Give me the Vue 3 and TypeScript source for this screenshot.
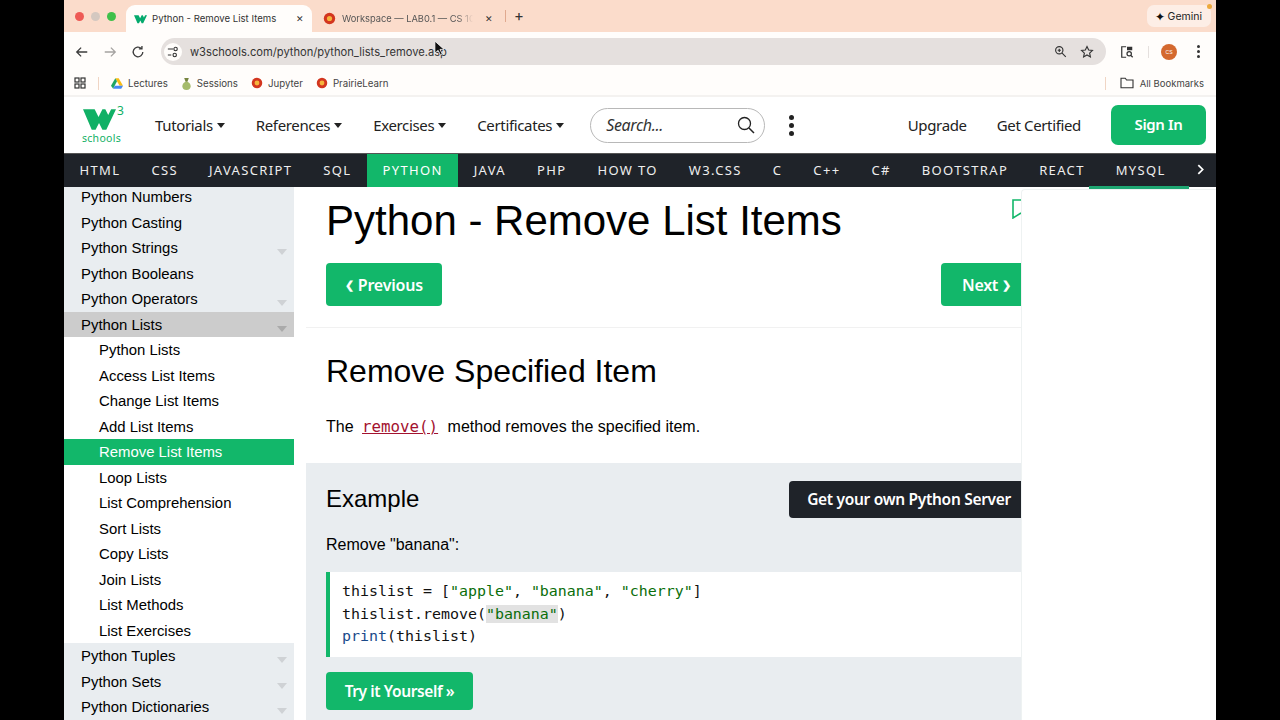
<template>
  <div class="stage">
    <div class="screen">
      <!-- browser chrome -->
      <div class="tabstrip">
        <div class="lights">
          <span class="light red"></span>
          <span class="light grey"></span>
          <span class="light green"></span>
        </div>
        <div class="tab active">
          <svg class="fav" viewBox="0 0 34 22" width="13" height="10"><path d="M0 1h12l4 8 4-8h3l3 6 3-6h5L24 22h-4l-3.500-7-3.500 7h-4z" fill="#04aa6d"/></svg>
          <span class="tab-title">Python - Remove List Items</span>
          <span class="tab-x">✕</span>
        </div>
        <div class="tab plain">
          <svg class="fav" viewBox="0 0 16 16" width="13" height="13"><circle cx="8" cy="8" r="7" fill="#d3361f"/><circle cx="8" cy="8" r="3.200" fill="#f5b53c"/></svg>
          <span class="tab-title fade">Workspace — LAB0.1 — CS 10</span>
          <span class="tab-x">✕</span>
        </div>
        <span class="tab-sep"></span>
        <span class="newtab">+</span>
        <span class="grow"></span>
        <div class="gemini"><span class="spark">✦</span>Gemini</div>
        <span class="notify"></span>
      </div>
      <div class="toolbar">
        <svg viewBox="0 0 16 16" width="14" height="14" class="tool"><path d="M14 8H2.500M7 3L2 8l5 5" fill="none" stroke="#3c3c3c" stroke-width="1.500"/></svg>
        <svg viewBox="0 0 16 16" width="14" height="14" class="tool"><path d="M2 8h11.500M9 3l5 5-5 5" fill="none" stroke="#a5a3a1" stroke-width="1.500"/></svg>
        <svg viewBox="0 0 16 16" width="14" height="14" class="tool"><path d="M13.500 8A5.500 5.500 0 1 1 11.800 4M12.500 1v3.500H9" fill="none" stroke="#3c3c3c" stroke-width="1.500"/></svg>
        <div class="omnibox">
          <span class="site-btn">
            <svg viewBox="0 0 14 14" width="12" height="12"><path d="M1 3.500h6M1 10.500h4" stroke="#333" stroke-width="1.300"/><circle cx="10" cy="3.500" r="2" fill="none" stroke="#333" stroke-width="1.300"/><circle cx="9" cy="10.500" r="2" fill="none" stroke="#333" stroke-width="1.300"/></svg>
          </span>
          <span class="url">w3schools.com/python/python_lists_remove.asp</span>
          <span class="grow"></span>
          <svg viewBox="0 0 16 16" width="13" height="13"><circle cx="6.500" cy="6.500" r="4.500" fill="none" stroke="#333" stroke-width="1.400"/><path d="M10 10l4.500 4.500M4.500 6.500h4M6.500 4.500v4" stroke="#333" stroke-width="1.400"/></svg>
          <svg class="star" viewBox="0 0 16 16" width="14" height="14"><path d="M8 1.800l1.900 4 4.300.5-3.200 3 .9 4.300L8 11.400l-3.900 2.200.9-4.300-3.200-3 4.300-.5z" fill="none" stroke="#333" stroke-width="1.300"/></svg>
        </div>
        <svg class="side-ico" viewBox="0 0 16 16" width="14" height="14"><path d="M7 2H2v12h5" fill="none" stroke="#333" stroke-width="1.400"/><rect x="8" y="2" width="6" height="4" fill="#333"/><circle cx="10.500" cy="10" r="2.500" fill="none" stroke="#333" stroke-width="1.400"/><path d="M12.500 12l2 2" stroke="#333" stroke-width="1.400"/></svg>
        <span class="tool-sep"></span>
        <span class="avatar">CS</span>
        <span class="kebab"><i></i><i></i><i></i></span>
      </div>
      <div class="bookmarks">
        <svg viewBox="0 0 12 12" width="12" height="12"><g fill="none" stroke="#333" stroke-width="1.200"><rect x="1" y="1" width="4" height="4"/><rect x="7" y="1" width="4" height="4"/><rect x="1" y="7" width="4" height="4"/><rect x="7" y="7" width="4" height="4"/></g></svg>
        <span class="bm-sep"></span>
        <div class="bm">
          <svg viewBox="0 0 14 12" width="12" height="11"><path d="M5 0h4l5 8.500h-4z" fill="#f9bc15"/><path d="M5 0l2 3.500L2.500 12 0 8.500z" fill="#1fa463"/><path d="M2.500 12l2-3.500H14L12 12z" fill="#4688f4"/></svg>
          Lectures
        </div>
        <div class="bm">
          <svg viewBox="0 0 12 14" width="11" height="13"><path d="M6 5c3 0 4.500 3 4.500 5A4.500 4 0 0 1 1.500 10C1.500 8 3 5 6 5z" fill="#a5bb6b"/><path d="M3.500 1h5L7 5H5z" fill="#76853f"/></svg>
          Sessions
        </div>
        <div class="bm">
          <svg viewBox="0 0 16 16" width="12" height="12"><circle cx="8" cy="8" r="7" fill="#d3361f"/><circle cx="8" cy="8" r="3.200" fill="#f5b53c"/></svg>
          Jupyter
        </div>
        <div class="bm">
          <svg viewBox="0 0 16 16" width="12" height="12"><circle cx="8" cy="8" r="7" fill="#d3361f"/><circle cx="8" cy="8" r="3.200" fill="#f5b53c"/></svg>
          PrairieLearn
        </div>
        <span class="grow"></span>
        <span class="bm-sep right"></span>
        <div class="bm all">
          <svg viewBox="0 0 16 14" width="14" height="12"><path d="M1 12.500V1.500h5l1.500 2H15v9z" fill="none" stroke="#333" stroke-width="1.300"/></svg>
          All Bookmarks
        </div>
      </div>

      <!-- w3schools header -->
      <div class="topnav">
        <div class="logo">
          <div class="logo-mark">
            <svg viewBox="0 0 34 22" width="33" height="22"><path d="M0 1h12l4 8 4-8h3l3 6 3-6h5L24 22h-4l-3.500-7-3.500 7h-4z" fill="#10b065"/></svg>
            <span class="logo-three">3</span>
          </div>
          <span class="logo-text">schools</span>
        </div>
        <nav class="menu">
          <span v-for="m in menus" :key="m" class="menu-item">{{ m }}<i class="caret"></i></span>
        </nav>
        <div class="search">
          <span>Search...</span>
          <svg viewBox="0 0 18 18" width="18" height="18"><circle cx="7.500" cy="7.500" r="6" fill="none" stroke="#222" stroke-width="1.300"/><path d="M12 12l5 5" stroke="#222" stroke-width="1.500"/></svg>
        </div>
        <span class="dots"><i></i><i></i><i></i></span>
        <span class="grow"></span>
        <span class="link upgrade">Upgrade</span>
        <span class="link">Get Certified</span>
        <span class="signin">Sign In</span>
      </div>
      <div class="topics">
        <span v-for="t in topics" :key="t" class="topic" :class="{ on: t === 'PYTHON' }">{{ t }}</span>
        <svg class="topic-next" viewBox="0 0 8 12" width="7" height="11"><path d="M1.500 1l5 5-5 5" fill="none" stroke="#fff" stroke-width="2"/></svg>
      </div>

      <div class="body">
        <aside class="sidebar">
          <div class="side-scroll">
            <div
              v-for="row in sideRows"
              :key="row.label"
              class="side-row"
              :class="{ sub: row.sub, open: row.open, current: row.current }"
            >
              {{ row.label }}
              <i v-if="row.arrow" class="side-caret"></i>
            </div>
          </div>
        </aside>
        <main class="main">
          <h1>Python - Remove List Items</h1>
          <div class="pager">
            <span class="btn"><span class="chev">❮</span> Previous</span>
            <span class="btn next">Next<span class="chev after">❯</span></span>
          </div>
          <hr />
          <h2>Remove Specified Item</h2>
          <p class="intro">The <a class="code-link">remove()</a> method removes the specified item.</p>
          <section class="example">
            <div class="ex-head">
              <h3>Example</h3>
              <span class="server">Get your own Python Server</span>
            </div>
            <p>Remove "banana":</p>
            <pre class="code"><span class="ln">thislist = [<b>"apple"</b>, <b>"banana"</b>, <b>"cherry"</b>]</span>
<span class="ln">thislist.remove(<b class="mark">"banana"</b>)</span>
<span class="ln"><em>print</em>(thislist)</span></pre>
            <span class="try">Try it Yourself »</span>
          </section>
          <svg class="ad-flag" viewBox="0 0 9 20" width="9" height="20"><path d="M9 1H1v18l8-5" fill="none" stroke="#12b76a" stroke-width="1.600"/></svg>
          <div class="ad-panel"></div>
        </main>
      </div>

      <span class="mysql-line"></span>
      <svg class="cursor" viewBox="0 0 12 18" width="11" height="17"><path d="M1 1v13l3.500-3 2.500 5 2-1-2.500-5H11z" fill="#111" stroke="#fff" stroke-width=".8"/></svg>
    </div>
  </div>
</template>

<script setup lang="ts">
interface SideRow {
  label: string
  sub?: boolean
  arrow?: boolean
  open?: boolean
  current?: boolean
}

const menus = ['Tutorials', 'References', 'Exercises', 'Certificates']

const topics = [
  'HTML', 'CSS', 'JAVASCRIPT', 'SQL', 'PYTHON', 'JAVA', 'PHP', 'HOW TO',
  'W3.CSS', 'C', 'C++', 'C#', 'BOOTSTRAP', 'REACT', 'MYSQL'
]

const sideRows: SideRow[] = [
  { label: 'Python Numbers' },
  { label: 'Python Casting' },
  { label: 'Python Strings', arrow: true },
  { label: 'Python Booleans' },
  { label: 'Python Operators', arrow: true },
  { label: 'Python Lists', arrow: true, open: true },
  { label: 'Python Lists ', sub: true },
  { label: 'Access List Items', sub: true },
  { label: 'Change List Items', sub: true },
  { label: 'Add List Items', sub: true },
  { label: 'Remove List Items', sub: true, current: true },
  { label: 'Loop Lists', sub: true },
  { label: 'List Comprehension', sub: true },
  { label: 'Sort Lists', sub: true },
  { label: 'Copy Lists', sub: true },
  { label: 'Join Lists', sub: true },
  { label: 'List Methods', sub: true },
  { label: 'List Exercises', sub: true },
  { label: 'Python Tuples', arrow: true },
  { label: 'Python Sets', arrow: true },
  { label: 'Python Dictionaries', arrow: true }
]
</script>

<style>
html, body { margin: 0; background: #000; }
</style>

<style scoped>
.stage {
  width: 1280px;
  height: 720px;
  overflow: hidden;
  background: #000;
  padding: 0 64px;
  box-sizing: border-box;
}
.screen {
  position: relative;
  width: 1152px;
  height: 720px;
  overflow: hidden;
  background: #fff;
  font-family: "Liberation Sans", Arial, sans-serif;
  color: #000;
}
.grow { flex: 1; }

/* tab strip */
.tabstrip {
  height: 32px;
  background: #fbdccb;
  display: flex;
  align-items: flex-end;
  position: relative;
  font-family: Inter, "Liberation Sans", sans-serif;
  font-size: 9.600px;
  color: #333;
}
.lights { display: flex; gap: 7px; align-self: center; padding: 0 0 0 11px; width: 62px; box-sizing: border-box; }
.light { width: 9px; height: 9px; border-radius: 50%; }
.light.red { background: #ee5a55; }
.light.grey { background: #d4c8c0; }
.light.green { background: #3fc04a; }
.tab {
  display: flex;
  align-items: center;
  height: 27px;
  box-sizing: border-box;
  padding: 0 8px;
  gap: 5px;
}
.tab.active { width: 186px; background: #fffdfb; border-radius: 9px 9px 0 0; }
.tab.plain { width: 187px; padding-left: 11px; padding-right: 6px; gap: 6px; color: #555; font-size: 9.300px; }
.tab-title { flex: 1; min-width: 0; white-space: nowrap; overflow: hidden; }
.tab-title.fade {
  -webkit-mask-image: linear-gradient(90deg, #000 88%, transparent);
  mask-image: linear-gradient(90deg, #000 88%, transparent);
}
.tab-x { font-size: 9px; color: #333; margin-left: 6px; }
.tab-sep { width: 1px; height: 12px; background: #e0a98f; align-self: center; margin: 0 8px 0 6px; }
.newtab { align-self: center; font-size: 15px; margin-bottom: 1px; }
.gemini {
  align-self: center;
  display: flex;
  align-items: center;
  gap: 3px;
  height: 22px;
  padding: 0 9px 0 8px;
  margin-right: 5px;
  background: #fdeee6;
  border-radius: 7px;
  font-size: 10.500px;
  color: #222;
}
.spark { font-size: 12px; color: #111; }
.notify { position: absolute; right: 4px; top: 4px; width: 5px; height: 5px; border-radius: 50%; background: #eda93c; }

/* toolbar */
.toolbar {
  height: 38px;
  box-sizing: border-box;
  background: #fffdfb;
  display: flex;
  align-items: center;
  padding: 6px 16px 5px 11px;
}
.tool { margin-right: 14px; }
.omnibox {
  flex: 1;
  height: 27px;
  background: #e5e0de;
  border-radius: 14px;
  display: flex;
  align-items: center;
  padding: 0 12px 0 3px;
  margin-left: 2px;
  gap: 5px;
}
.site-btn {
  width: 18px;
  height: 18px;
  background: #fffdfb;
  border-radius: 50%;
  display: flex;
  align-items: center;
  justify-content: center;
}
.url { font-family: Inter, "Liberation Sans", sans-serif; font-size: 11.150px; color: #333; white-space: nowrap; margin-left: 3px; }
.star { margin-left: 8px; }
.side-ico { margin-left: 14px; }
.tool-sep { width: 1px; height: 12px; background: #e5e0de; margin: 0 12px 0 14px; }
.avatar {
  width: 16px;
  height: 16px;
  border-radius: 50%;
  background: #d4692f;
  color: #fff;
  font-size: 5px;
  display: flex;
  align-items: center;
  justify-content: center;
  margin-right: 20px;
}
.kebab { display: flex; flex-direction: column; gap: 2px; }
.kebab i { width: 3px; height: 3px; border-radius: 50%; background: #333; }

/* bookmarks */
.bookmarks {
  height: 27px;
  background: #fffdfb;
  border-bottom: 2px solid #f4f2f0;
  box-sizing: border-box;
  display: flex;
  align-items: center;
  padding: 1px 12px 0 10px;
  font-family: Inter, "Liberation Sans", sans-serif;
  font-size: 9.700px;
  color: #444;
}
.bm { display: flex; align-items: center; gap: 5px; margin-right: 13px; white-space: nowrap; }
.bm.all { margin-right: 0; gap: 6px; font-size: 9.500px; }
.bm-sep { width: 1px; height: 13px; background: #f0d5c4; margin: 0 12px; }
.bm-sep.right { margin: 0 14px 0 0; }

/* top nav */
.topnav {
  height: 56px;
  display: flex;
  align-items: center;
  padding: 0 10px 0 18px;
  font-family: "Noto Sans", "Open Sans", sans-serif;
  font-size: 15px;
  color: #222;
  letter-spacing: -.35px;
}
.logo { width: 39px; display: flex; flex-direction: column; align-items: center; position: relative; margin-top: 2px; }
.logo-mark { position: relative; height: 22px; align-self: flex-start; margin-left: 1px; }
.logo-three { position: absolute; left: 34px; top: -4px; font-size: 12px; line-height: 14px; color: #10b065; letter-spacing: 0; }
.logo-text { font-size: 10.500px; letter-spacing: .3px; color: #10b065; line-height: 12px; margin-top: 2px; }
.menu { display: flex; gap: 31px; margin-left: 34px; }
.menu-item { display: flex; align-items: center; gap: 4px; white-space: nowrap; }
.caret { width: 0; height: 0; border-left: 4.500px solid transparent; border-right: 4.500px solid transparent; border-top: 5px solid #222; }
.search {
  width: 175px;
  height: 35px;
  box-sizing: border-box;
  border: 1px solid #b8b8b8;
  border-radius: 18px;
  display: flex;
  align-items: center;
  justify-content: space-between;
  padding: 0 9px 0 15px;
  margin-left: 26px;
  font-style: italic;
  font-size: 16px;
  color: #333;
}
.dots { display: flex; flex-direction: column; gap: 3px; margin-left: 24px; }
.dots i { width: 5px; height: 5px; border-radius: 50%; background: #222; }
.link { white-space: nowrap; margin-left: 30px; }
.signin {
  width: 95px;
  height: 40px;
  margin-left: 30px;
  background: #12b76a;
  color: #fff;
  border-radius: 7px;
  display: flex;
  align-items: center;
  justify-content: center;
  font-weight: 600;
  padding-bottom: 2px;
  box-sizing: border-box;
}

/* topic bar */
.topics {
  height: 34px;
  background: #1f2329;
  border-top: 1px solid #555;
  box-sizing: border-box;
  padding-bottom: 2px;
  display: flex;
  align-items: stretch;
  font-family: "Noto Sans", "Open Sans", sans-serif;
  font-size: 13px;
  letter-spacing: 1.350px;
  color: #eee;
  position: relative;
}
.topic { padding: 0 15.500px; display: flex; align-items: center; white-space: nowrap; }
.topic.on { background: #12b76a; color: #fff; margin-bottom: -2px; padding-bottom: 2px; }
.topic-next { align-self: center; margin-left: 16px; }
.mysql-line { position: absolute; left: 1025px; top: 186px; width: 100px; height: 3px; background: #1ea672; }

/* page body */
.body { display: flex; height: 533px; overflow: hidden; }
.sidebar { width: 230px; flex: none; background: #e9edf0; overflow: hidden; }
.side-scroll { margin-top: -3px; }
.side-row {
  height: 25.500px;
  line-height: 27px;
  padding-left: 17px;
  font-size: 14.900px;
  position: relative;
  white-space: nowrap;
}
.side-row.sub { padding-left: 35px; background: #fff; }
.side-row.open { background: #ccc; }
.side-row.current { background: #12b76a; color: #fff; }
.side-caret {
  position: absolute;
  right: 7px;
  top: 14px;
  border-left: 5px solid transparent;
  border-right: 5px solid transparent;
  border-top: 6px solid #cfd2d5;
}
.side-row.open .side-caret { border-top-color: #aaa; }

.main { flex: 1; position: relative; padding: 0 0 0 12px; min-width: 0; overflow: hidden; }
h1 { margin: 10px 0 0 20px; font-size: 42px; font-weight: 400; line-height: 48px; white-space: nowrap; }
.pager { display: flex; justify-content: space-between; margin: 18px 0 0 20px; width: 700px; }
.btn {
  height: 43px;
  padding: 0 19px 0 19px;
  background: #12b76a;
  color: #fff;
  border-radius: 4px;
  display: flex;
  align-items: center;
  font-family: "Noto Sans", sans-serif;
  font-size: 16px;
  font-weight: 600;
  letter-spacing: -.2px;
  white-space: pre;
}
.chev { font-size: 11px; font-weight: 700; }
.chev.after { margin-left: 4px; }
.btn.next { width: 85px; box-sizing: border-box; padding: 0 0 0 21px; letter-spacing: -.3px; }
hr { margin: 21px 0 0; border: 0; border-top: 1px solid #f1f1f1; }
h2 { margin: 24px 0 0 20px; font-size: 32px; font-weight: 400; line-height: 38px; white-space: nowrap; }
.intro { margin: 26px 0 0 20px; font-size: 16px; line-height: 22px; white-space: nowrap; }
.code-link {
  font-family: "DejaVu Sans Mono", monospace;
  font-size: 15.800px;
  color: #a3122f;
  text-decoration: underline;
  margin: 0 5px 0 4px;
}
.example { margin-top: 25px; background: #e9edf0; padding: 18px 0 30px 20px; height: 300px; }
.ex-head { display: flex; justify-content: space-between; align-items: center; height: 36px; }
h3 { margin: 0; font-size: 24px; font-weight: 400; }
.server {
  height: 37px;
  margin-right: 187px;
  padding: 0 18px;
  background: #1f2329;
  color: #fff;
  border-radius: 4px;
  display: flex;
  align-items: center;
  font-family: "Noto Sans", sans-serif;
  font-size: 15.500px;
  font-weight: 600;
  letter-spacing: -.3px;
  white-space: nowrap;
}
.example p { margin: 17px 0 0; font-size: 16px; line-height: 22px; }
.code {
  margin: 16px 0 0;
  height: 85px;
  box-sizing: border-box;
  background: #fff;
  border-left: 4px solid #12b76a;
  padding: 8px 0 0 12px;
  font-family: "DejaVu Sans Mono", monospace;
  font-size: 14.950px;
  line-height: 22.700px;
  color: #111;
}
.ln { display: inline-block; height: 22.700px; }
.code b { font-weight: 400; color: #0a6e0a; }
.code b.mark { background: #e2e2e2; }
.code em { font-style: normal; color: #1a4a8a; }
.try {
  display: flex;
  align-items: center;
  justify-content: center;
  width: 147px;
  height: 38px;
  margin-top: 15px;
  background: #12b76a;
  color: #fff;
  border-radius: 4px;
  font-family: "Noto Sans", sans-serif;
  font-size: 15.500px;
  font-weight: 600;
  letter-spacing: -.4px;
}

/* ad box hanging over the content */
.ad-flag { position: absolute; left: 718px; top: 12px; }
.ad-panel {
  position: absolute;
  left: 727px;
  top: 2px;
  width: 200px;
  height: 540px;
  background: #fff;
  border: 1px solid #eef2f2;
  border-right: 0;
  border-radius: 4px 0 0 0;
}
.cursor { position: absolute; left: 370px; top: 40px; }
</style>
